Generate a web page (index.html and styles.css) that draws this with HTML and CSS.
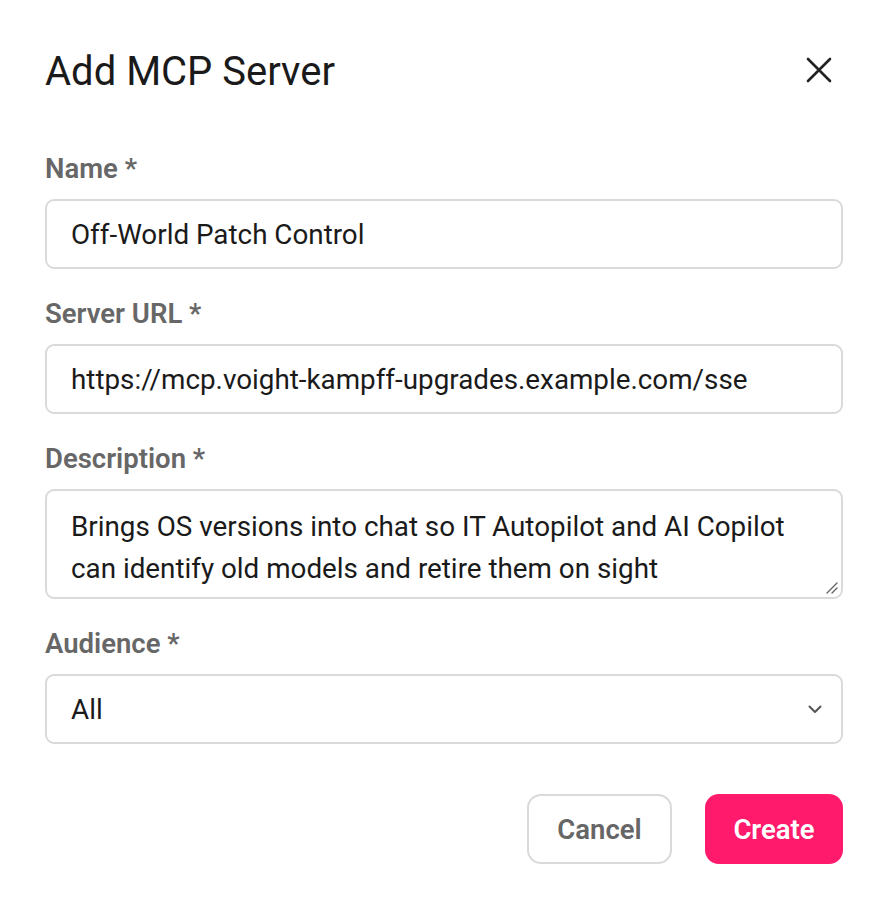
FILE: index.html
```html
<!DOCTYPE html>
<html>
<head>
<meta charset="utf-8">
<link rel="stylesheet" href="styles.css">
</head>
<body>
<div class="dialog">
  <div class="header">
    <h1 class="title">Add MCP Server</h1>
    <button class="close" aria-label="Close">
      <svg width="26" height="26" viewBox="0 0 26 26"><path d="M2 2 L24 24 M24 2 L2 24" stroke="#222" stroke-width="2.6" stroke-linecap="round" fill="none"/></svg>
    </button>
  </div>
  <div class="field">
    <label class="label">Name *</label>
    <div class="input">Off-World Patch Control</div>
  </div>
  <div class="field">
    <label class="label">Server URL *</label>
    <div class="input">https://mcp.voight-kampff-upgrades.example.com/sse</div>
  </div>
  <div class="field">
    <label class="label">Description *</label>
    <div class="input textarea">Brings OS versions into chat so IT Autopilot and AI Copilot can identify old models and retire them on sight
      <svg class="grip" width="14" height="14" viewBox="0 0 14 14"><path d="M13 3 L3 13 M13 8 L8 13" stroke="#666" stroke-width="1.4" stroke-linecap="round" fill="none"/></svg>
    </div>
  </div>
  <div class="field">
    <label class="label">Audience *</label>
    <div class="input select">All
      <svg class="chev" width="14" height="9" viewBox="0 0 14 9"><path d="M1.5 1.5 L7 7 L12.5 1.5" stroke="#555" stroke-width="2" stroke-linecap="round" stroke-linejoin="round" fill="none"/></svg>
    </div>
  </div>
  <div class="actions">
    <button class="btn cancel">Cancel</button>
    <button class="btn create">Create</button>
  </div>
</div>
</body>
</html>
```
FILE: styles.css
```css
html, body {
  margin: 0;
  padding: 0;
  background: #fff;
}
body {
  font-family: Roboto, "Liberation Sans", sans-serif;
  color: #1c1c1c;
}
.dialog {
  padding: 44px 45px 0 45px;
}
.header {
  display: flex;
  justify-content: space-between;
  align-items: center;
  margin-bottom: 53px;
}
.title {
  margin: 0;
  font-size: 40px;
  font-weight: 400;
  line-height: 56px;
  color: #1a1a1a;
}
.close {
  border: none;
  background: none;
  padding: 0;
  margin-right: 11px;
  margin-top: -5px;
  width: 26px;
  height: 26px;
  display: flex;
}
.field {
  display: flex;
  flex-direction: column;
  margin-bottom: 29px;
}
.label {
  font-size: 27.5px;
  font-weight: 600;
  color: #676767;
  line-height: 32px;
  margin-bottom: 14px;
}
.input {
  box-sizing: border-box;
  height: 70px;
  border: 2px solid #dadada;
  border-radius: 9px;
  padding: 0 24px;
  font-size: 27.8px;
  color: #1a1a1a;
  display: flex;
  align-items: center;
  position: relative;
}
.textarea {
  height: 110px;
  align-items: flex-start;
  padding-top: 15px;
  padding-right: 20px;
  line-height: 42px;
}
.grip {
  position: absolute;
  right: 3px;
  bottom: 3px;
}
.select {
  justify-content: space-between;
  padding-right: 19px;
}
.actions {
  display: flex;
  justify-content: flex-end;
  gap: 33px;
  margin-top: 50px;
}
.btn {
  box-sizing: border-box;
  height: 70px;
  border-radius: 14px;
  font-family: Roboto, "Liberation Sans", sans-serif;
  font-size: 27.5px;
  font-weight: 600;
  padding: 0;
}
.cancel {
  width: 145px;
  background: #fff;
  border: 2px solid #dadada;
  color: #666;
}
.create {
  width: 138px;
  background: #ff1a6b;
  border: none;
  color: #fff;
}
```
